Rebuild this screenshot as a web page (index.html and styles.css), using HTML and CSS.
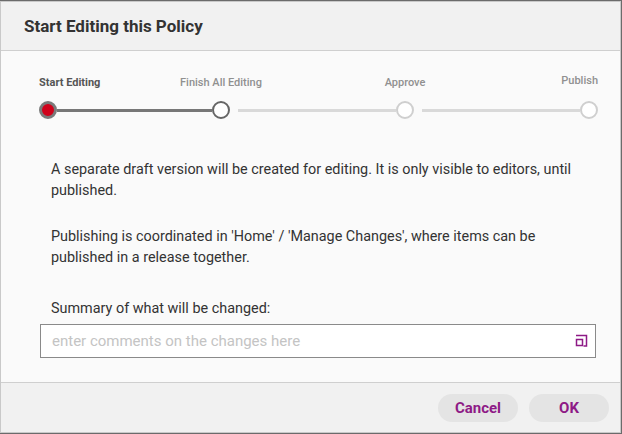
FILE: index.html
```html
<!DOCTYPE html>
<html lang="en">
<head>
  <meta charset="UTF-8" />
  <title>Start Editing this Policy</title>
  <link rel="stylesheet" href="styles.css">
</head>
<body>
<div class="dialog">
  <div class="dialog-header">
    <h1>Start Editing this Policy</h1>
  </div>

  <div class="dialog-body">
    <div class="stepper">
      <div class="step step-first step-current">
        <span class="step-label">Start Editing</span>
        <span class="dot"></span>
      </div>
      <div class="track track-done"></div>
      <div class="step step-next">
        <span class="step-label">Finish All Editing</span>
        <span class="dot"></span>
      </div>
      <div class="track"></div>
      <div class="step">
        <span class="step-label">Approve</span>
        <span class="dot"></span>
      </div>
      <div class="track"></div>
      <div class="step step-last">
        <span class="step-label">Publish</span>
        <span class="dot"></span>
      </div>
    </div>

    <div class="message">
      <p>A separate draft version will be created for editing. It is only visible to editors, until published.</p>
      <p>Publishing is coordinated in 'Home' / 'Manage Changes', where items can be published in a release together.</p>
      <label for="summary">Summary of what will be changed:</label>
    </div>

    <div class="comment-box">
      <input type="text" id="summary" placeholder="enter comments on the changes here" />
      <svg class="expand" width="13" height="13" viewBox="0 0 13 13">
        <path d="M1 1.5h10.5v10.5h-3" fill="none" stroke="#8e1a86" stroke-width="1.5"/>
        <rect x="1.5" y="5.5" width="6" height="6" fill="none" stroke="#8e1a86" stroke-width="1.5"/>
      </svg>
    </div>
  </div>

  <div class="dialog-footer">
    <button type="button" class="btn">Cancel</button>
    <button type="button" class="btn">OK</button>
  </div>
</div>
</body>
</html>
```

FILE: styles.css
```css
body {
  margin: 0;
  padding: 0;
  background: #6b6b6b;
  font-family: Roboto, "Liberation Sans", sans-serif;
  color: #333;
}

.dialog {
  margin-top: 1px;
  width: 621px;
  box-sizing: border-box;
  border: 1px solid #c9c9c9;
  background: #fafafa;
}

.dialog-header {
  height: 48px;
  display: flex;
  align-items: center;
  padding: 0 23px;
  background: #f1f1f1;
  border-bottom: 1px solid #cfcfcf;
}

.dialog-header h1 {
  margin: 0;
  font-size: 17px;
  font-weight: 700;
  color: #333;
}

.dialog-body {
  height: 331px;
  box-sizing: border-box;
  padding-top: 23px;
}

/* stepper */
.stepper {
  display: flex;
  align-items: flex-end;
  padding: 0 22px 0 38px;
}

.step {
  width: 18px;
  display: flex;
  flex-direction: column;
  align-items: center;
  flex-shrink: 0;
}

.step-first { align-items: flex-start; }
.step-last { align-items: flex-end; }

.step-label {
  font-size: 11px;
  line-height: 14px;
  font-weight: 500;
  color: #909090;
  white-space: nowrap;
  margin-bottom: 11px;
}

.step-last .step-label { margin-bottom: 13px; }

.step-current .step-label {
  color: #555;
  font-weight: 700;
}

.dot {
  width: 18px;
  height: 18px;
  box-sizing: border-box;
  border-radius: 50%;
  border: 2.5px solid #cfcfcf;
  background: #fff;
}

.step-current .dot {
  border: 3px solid #7a7a7a;
  background: #d0021b;
}

.step-next .dot {
  border-color: #666;
}

.track {
  flex: 1;
  height: 3px;
  margin: 0 0 7.5px 8px;
  background: #d9d9d9;
}

.track-done {
  flex: 0 0 155px;
  margin-left: 0;
  background: #777;
}

/* text */
.message {
  padding: 40px 22px 0 50px;
  font-size: 14.4px;
  line-height: 21px;
  color: #333;
}

.message p {
  margin: 0 0 25px;
}

.message label {
  display: block;
  margin-top: 30px;
}

.comment-box {
  position: relative;
  margin: 5px 24px 0 39px;
}

.comment-box input {
  width: 100%;
  height: 34px;
  box-sizing: border-box;
  border: 1px solid #8a8a8a;
  padding: 0 36px 0 11px;
  font-family: Roboto, "Liberation Sans", sans-serif;
  font-size: 15px;
  color: #333;
  background: #fff;
  outline: none;
}

.comment-box input::placeholder {
  color: #c4c4c4;
}

.expand {
  position: absolute;
  right: 8px;
  top: 10px;
}

/* footer */
.dialog-footer {
  height: 49px;
  display: flex;
  justify-content: flex-end;
  align-items: center;
  gap: 11px;
  padding: 0 11px;
  background: #f1f1f1;
  border-top: 1px solid #cfcfcf;
}

.btn {
  width: 80px;
  height: 28px;
  border: none;
  border-radius: 14px;
  background: #e4e4e4;
  color: #8e1a86;
  font-family: Roboto, "Liberation Sans", sans-serif;
  font-size: 15px;
  font-weight: 700;
  cursor: pointer;
}
```
